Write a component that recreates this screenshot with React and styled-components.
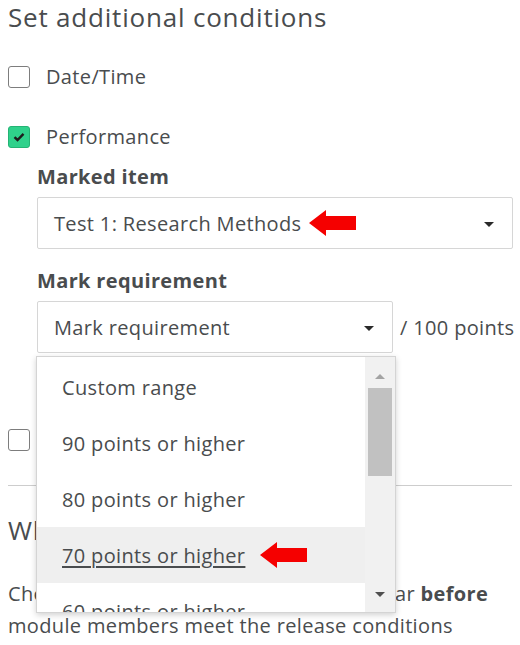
import React from 'react';
import styled, { createGlobalStyle } from 'styled-components';

const GlobalStyle = createGlobalStyle`
  html, body {
    margin: 0;
    padding: 0;
    background: #ffffff;
  }
  body {
    font-family: "Open Sans", "DejaVu Sans", sans-serif;
    color: #494c4e;
    letter-spacing: 0.35px;
  }
`;

const options = [
  'Custom range',
  '90 points or higher',
  '80 points or higher',
  '70 points or higher',
  '60 points or higher',
];

const RedArrow = ({ gap }) => (
  <ArrowSvg gap={gap} width="47" height="26" viewBox="0 0 47 26">
    <polygon points="0,13 17,0 17,6 47,6 47,20 17,20 17,26" fill="#f50000" />
  </ArrowSvg>
);

const App = () => {
  return (
    <Page>
      <GlobalStyle />
      <Title>Set additional conditions</Title>

      <CheckRow top={32}>
        <Box />
        <CheckLabel>Date/Time</CheckLabel>
      </CheckRow>

      <CheckRow top={38}>
        <Box checked>
          <svg width="12" height="10" viewBox="0 0 12 10">
            <path d="M1.5 5.2 L4.5 8 L10.5 1.8" fill="none" stroke="#1d1d1d" strokeWidth="2.4" />
          </svg>
        </Box>
        <CheckLabel>Performance</CheckLabel>
      </CheckRow>

      <Fields>
        <FieldLabel top={17}>Marked item</FieldLabel>
        <Select width={476}>
          <Value>
            Test 1: Research Methods
            <RedArrow gap={8} />
          </Value>
          <Caret />
        </Select>

        <FieldLabel top={20}>Mark requirement</FieldLabel>
        <SelectLine>
          <SelectHolder>
            <Select width={356}>
              <Value>Mark requirement</Value>
              <Caret />
            </Select>
            <Menu>
              <List>
                {options.map((o, i) => (
                  <Item key={o} active={i === 3}>
                    <ItemText active={i === 3}>{o}</ItemText>
                    {i === 3 && <RedArrow gap={15} />}
                  </Item>
                ))}
              </List>
              <Track>
                <TrackArrow up />
                <Thumb />
                <TrackSpace />
                <TrackArrow />
              </Track>
            </Menu>
          </SelectHolder>
          <Suffix>/ 100 points</Suffix>
        </SelectLine>
      </Fields>

      <CheckRow top={76}>
        <Box />
        <CheckLabel>Competency</CheckLabel>
      </CheckRow>

      <Rule />

      <Heading>When is this module visible?</Heading>
      <Para>
        Choose whether the content items appear <b>before</b>{' '}
        module members meet the release conditions
      </Para>
    </Page>
  );
};

export default App;

const Page = styled.div`
  padding: 0 8px 0 8px;
  width: 504px;
  height: 645px;
  overflow: hidden;
`;

const Title = styled.h2`
  margin: 0;
  font-size: 26px;
  line-height: 34px;
  font-weight: 400;
  letter-spacing: 0.8px;
  color: #494c4e;
`;

const CheckRow = styled.div`
  display: flex;
  align-items: center;
  height: 22px;
  margin-top: ${(p) => p.top}px;
`;

const Box = styled.span`
  box-sizing: border-box;
  width: 22px;
  height: 22px;
  border-radius: 3px;
  border: 1.5px solid ${(p) => (p.checked ? '#24b374' : '#7d7d7d')};
  background: ${(p) => (p.checked ? '#2fd18b' : '#ffffff')};
  display: flex;
  align-items: center;
  justify-content: center;
`;

const CheckLabel = styled.span`
  margin-left: 16px;
  font-size: 20px;
  line-height: 22px;
`;

const Fields = styled.div`
  padding-left: 29px;
`;

const FieldLabel = styled.div`
  margin-top: ${(p) => p.top}px;
  margin-bottom: 8px;
  font-size: 20px;
  line-height: 24px;
  font-weight: 700;
`;

const Select = styled.div`
  box-sizing: border-box;
  width: ${(p) => p.width}px;
  height: 52px;
  border: 1px solid #d6d6d6;
  border-radius: 2px;
  background: #ffffff;
  display: flex;
  align-items: center;
  justify-content: space-between;
  padding: 0 18px 0 16px;
`;

const Value = styled.span`
  display: flex;
  align-items: center;
  font-size: 20px;
  color: #494c4e;
`;

const ArrowSvg = styled.svg`
  margin-left: ${(p) => p.gap}px;
  flex: none;
`;

const Caret = styled.span`
  width: 0;
  height: 0;
  border-left: 5px solid transparent;
  border-right: 5px solid transparent;
  border-top: 5px solid #2a2a2a;
  margin-top: 3px;
`;

const SelectLine = styled.div`
  display: flex;
  align-items: center;
`;

const SelectHolder = styled.div`
  position: relative;
`;

const Suffix = styled.span`
  margin-left: 7px;
  font-size: 20px;
  color: #494c4e;
  white-space: nowrap;
`;

const Menu = styled.div`
  position: absolute;
  z-index: 5;
  left: -1px;
  top: calc(100% + 3px);
  box-sizing: border-box;
  width: 360px;
  height: 257px;
  background: #ffffff;
  border: 1px solid #d4d4d4;
  box-shadow: 0 2px 6px rgba(0, 0, 0, 0.18);
  display: flex;
  overflow: hidden;
`;

const List = styled.div`
  flex: 1;
  padding-top: 2px;
`;

const Item = styled.div`
  height: 56px;
  display: flex;
  align-items: center;
  padding-left: 25px;
  background: ${(p) => (p.active ? '#efefef' : '#ffffff')};
`;

const ItemText = styled.span`
  font-size: 20px;
  color: #494c4e;
  text-decoration: ${(p) => (p.active ? 'underline' : 'none')};
  text-underline-offset: 3px;
`;

const Track = styled.div`
  width: 30px;
  background: #f1f1f1;
  display: flex;
  flex-direction: column;
  align-items: center;
`;

const TrackArrow = styled.span`
  margin: ${(p) => (p.up ? '17px 0 9px' : '0 0 15px')};
  width: 0;
  height: 0;
  border-left: 5px solid transparent;
  border-right: 5px solid transparent;
  ${(p) =>
    p.up
      ? 'border-bottom: 5px solid #a3a3a3;'
      : 'border-top: 5px solid #505050;'}
`;

const Thumb = styled.div`
  width: 24px;
  height: 88px;
  background: #c1c1c1;
`;

const TrackSpace = styled.div`
  flex: 1;
`;

const Rule = styled.hr`
  margin: 34px 0 0 0;
  border: none;
  border-top: 1px solid #cdcdcd;
  width: 504px;
`;

const Heading = styled.h2`
  margin: 26px 0 0 0;
  font-size: 26px;
  line-height: 36px;
  font-weight: 400;
  letter-spacing: 0.8px;
  color: #494c4e;
  white-space: nowrap;
`;

const Para = styled.p`
  margin: 30px 0 0 0;
  font-size: 20px;
  line-height: 32px;
  color: #494c4e;
  width: 504px;

  b {
    font-weight: 700;
  }
`;
